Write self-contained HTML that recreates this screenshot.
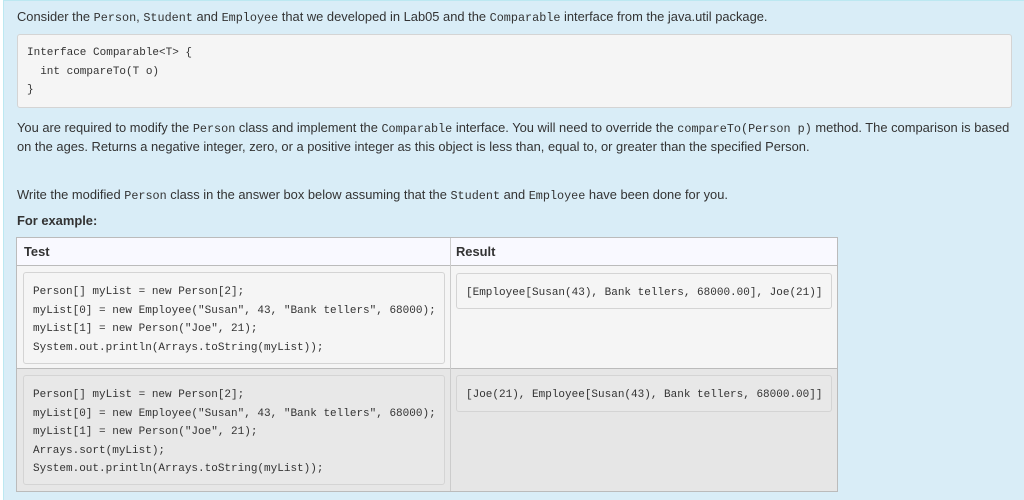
<!DOCTYPE html>
<html><head><style>
body{margin:0;width:1024px;height:500px;background:#fff;position:relative;overflow:hidden;font-family:"Liberation Sans",Arial,sans-serif;font-size:12.9px;color:#333}
.outer{position:absolute;left:3px;top:0;width:1021px;height:500px;background:#d9edf7;border-left:1px solid #bce8f1;border-top:1px solid #bce8f1;box-sizing:border-box}
.t{position:absolute;white-space:nowrap;line-height:14px}
code,.m{font-family:"Liberation Mono",monospace;font-size:11.8px}
.pre{position:absolute;background:#f5f5f5;border:1px solid #d4d4d4;border-radius:3px;box-sizing:border-box;font-family:"Liberation Mono",monospace;font-size:11px;color:#333;white-space:pre;line-height:18.5px}
.cell{position:absolute;box-sizing:border-box}
</style></head><body>
<div class="outer"></div>
<div class="t" style="left:17px;top:10px">Consider the <code>Person</code>, <code>Student</code> and <code>Employee</code> that we developed in Lab05 and the <code>Comparable</code> interface from the java.util package.</div>
<div class="pre" style="left:17px;top:34px;width:995px;height:74px;padding:9px 0 0 9px">Interface Comparable&lt;T&gt; {
  int compareTo(T o)
}</div>
<div class="t" style="left:17px;top:121px">You are required to modify the <code>Person</code> class and implement the <code>Comparable</code> interface. You will need to override the <code>compareTo(Person p)</code> method. The comparison is based</div>
<div class="t" style="left:17px;top:140px">on the ages. Returns a negative integer, zero, or a positive integer as this object is less than, equal to, or greater than the specified Person.</div>
<div class="t" style="left:17px;top:188px">Write the modified <code>Person</code> class in the answer box below assuming that the <code>Student</code> and <code>Employee</code> have been done for you.</div>
<div class="t" style="left:17px;top:214px;font-weight:bold">For example:</div>

<div class="cell" style="left:16px;top:237px;width:822px;height:255px;border:1px solid #bbb;background:#fff"></div>
<div class="cell" style="left:17px;top:238px;width:820px;height:28px;background:#f9f9ff;border-bottom:1px solid #bbb"></div>
<div class="t" style="left:24px;top:245px;font-weight:bold">Test</div>
<div class="t" style="left:456px;top:245px;font-weight:bold">Result</div>
<div class="cell" style="left:17px;top:266px;width:820px;height:103px;background:#f5f5f5;border-bottom:1px solid #bbb"></div>
<div class="cell" style="left:17px;top:369px;width:820px;height:122px;background:#e6e6e6"></div>
<div class="cell" style="left:450px;top:238px;width:1px;height:253px;background:#ccc"></div>

<div class="pre" style="left:23px;top:272px;width:422px;height:92px;padding:10px 0 0 9px">Person[] myList = new Person[2];
myList[0] = new Employee("Susan", 43, "Bank tellers", 68000);
myList[1] = new Person("Joe", 21);
System.out.println(Arrays.toString(myList));</div>
<div class="pre" style="left:456px;top:273px;width:376px;height:36px;padding:10px 0 0 9px">[Employee[Susan(43), Bank tellers, 68000.00], Joe(21)]</div>

<div class="pre" style="left:23px;top:375px;width:422px;height:110px;padding:10px 0 0 9px;background:#e8e8e8">Person[] myList = new Person[2];
myList[0] = new Employee("Susan", 43, "Bank tellers", 68000);
myList[1] = new Person("Joe", 21);
Arrays.sort(myList);
System.out.println(Arrays.toString(myList));</div>
<div class="pre" style="left:456px;top:375px;width:376px;height:37px;padding:10px 0 0 9px;background:#e8e8e8">[Joe(21), Employee[Susan(43), Bank tellers, 68000.00]]</div>
</body></html>
